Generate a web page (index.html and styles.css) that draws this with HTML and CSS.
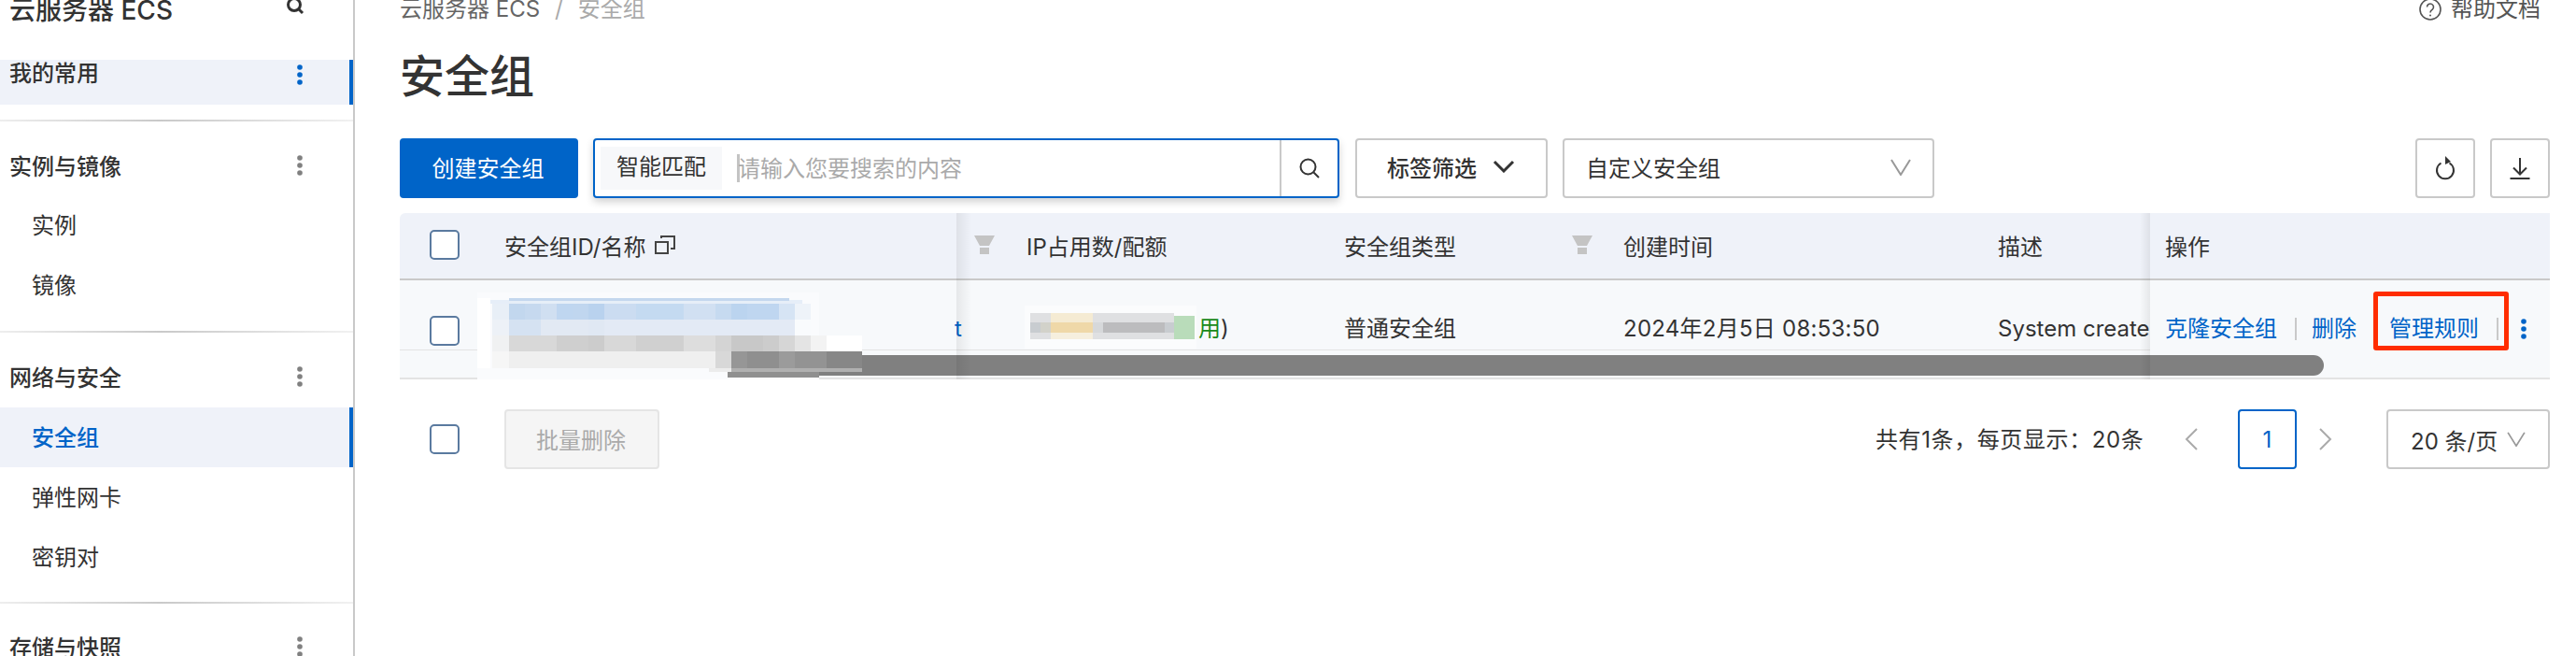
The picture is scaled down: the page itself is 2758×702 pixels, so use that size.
FILE: index.html
```html
<!DOCTYPE html>
<html lang="zh-CN">
<head>
<meta charset="utf-8">
<title>安全组</title>
<link rel="stylesheet" href="styles.css">
</head>
<body>
<div class="page">
  <aside class="sidebar">
    <div class="side-head">
      <span class="side-title">云服务器 ECS</span>
      <svg class="side-search" viewBox="0 0 20 20"><circle cx="9" cy="9" r="6.5"/><path d="M13.5 13.5L18 18"/></svg>
    </div>
    <div class="fav">
      <span class="fav-text">我的常用</span>
      <svg class="dots dots-blue" viewBox="0 0 6 22"><circle cx="3" cy="3" r="2.800"/><circle cx="3" cy="11" r="2.800"/><circle cx="3" cy="19" r="2.800"/></svg>
    </div>
    <div class="divider div-a"></div>
    <div class="nav-head"><span>实例与镜像</span><svg class="dots" viewBox="0 0 6 22"><circle cx="3" cy="3" r="2.800"/><circle cx="3" cy="11" r="2.800"/><circle cx="3" cy="19" r="2.800"/></svg></div>
    <div class="nav-item">实例</div>
    <div class="nav-item">镜像</div>
    <div class="divider div-b"></div>
    <div class="nav-head"><span>网络与安全</span><svg class="dots" viewBox="0 0 6 22"><circle cx="3" cy="3" r="2.800"/><circle cx="3" cy="11" r="2.800"/><circle cx="3" cy="19" r="2.800"/></svg></div>
    <div class="nav-item active">安全组</div>
    <div class="nav-item">弹性网卡</div>
    <div class="nav-item">密钥对</div>
    <div class="divider div-c"></div>
    <div class="nav-head"><span>存储与快照</span><svg class="dots" viewBox="0 0 6 22"><circle cx="3" cy="3" r="2.800"/><circle cx="3" cy="11" r="2.800"/><circle cx="3" cy="19" r="2.800"/></svg></div>
  </aside>

  <main class="main">
    <div class="crumbs">
      <div class="crumb-path"><span>云服务器 ECS</span><span class="crumb-sep">/</span><span class="crumb-now">安全组</span></div>
      <div class="help">
        <svg class="help-icon" viewBox="0 0 24 24"><circle cx="12" cy="12" r="11"/><path d="M8.500 9.500a3.500 3.500 0 1 1 5.600 2.800c-1.300 1-2.100 1.500-2.100 3.200"/><circle class="help-dot" cx="12" cy="18.500" r="1"/></svg>
        <span>帮助文档</span>
      </div>
    </div>
    <h1 class="title">安全组</h1>

    <div class="toolbar">
      <button class="btn-primary">创建安全组</button>
      <div class="search">
        <span class="search-tag">智能匹配</span>
        <span class="caret"></span>
        <span class="placeholder">请输入您要搜索的内容</span>
        <span class="search-btn"><svg class="search-icon" viewBox="0 0 24 24"><circle cx="10.500" cy="10.500" r="8"/><path d="M16.500 16.500L22 22"/></svg></span>
      </div>
      <div class="tag-filter"><span>标签筛选</span><svg class="chev-bold" viewBox="0 0 24 14"><path d="M2 2l10 10L22 2"/></svg></div>
      <div class="select select-group"><span>自定义安全组</span><svg class="chev-thin" viewBox="0 0 22 18"><path d="M1 1l10 16L21 1"/></svg></div>
      <div class="tools">
        <div class="icon-btn"><svg class="refresh" viewBox="0 0 24 28"><path d="M7.500 8.500a9 9 0 1 0 9 0"/><path class="fill" d="M12 1l6 6-6 3z"/></svg></div>
        <div class="icon-btn"><svg class="download" viewBox="0 0 24 24"><path d="M12 1v17M5 11.500l7 7 7-7M1.500 23h21"/></svg></div>
      </div>
    </div>

    <div class="table">
      <div class="grid thead">
        <div class="cell cell-check"><span class="check"></span></div>
        <div class="cell">安全组ID/名称<svg class="copy" viewBox="0 0 22 20"><path d="M1 7h13v12H1zM7 3V1h14v13h-4"/></svg></div>
        <div class="cell cell-filter"><svg class="funnel" viewBox="0 0 22 20"><path d="M0 0h22l-6 11H6zM6 13h10v7H6z"/></svg></div>
        <div class="cell">IP占用数/配额</div>
        <div class="cell cell-between">安全组类型<svg class="funnel funnel-end" viewBox="0 0 22 20"><path d="M0 0h22l-6 11H6zM6 13h10v7H6z"/></svg></div>
        <div class="cell">创建时间</div>
        <div class="cell">描述</div>
        <div class="cell cell-ops">操作</div>
      </div>
      <div class="grid tbody">
        <div class="cell cell-check"><span class="check"></span></div>
        <div class="cell"></div>
        <div class="cell cell-link"><span class="link-tail">t</span></div>
        <div class="cell cell-ip"><span class="ip-used">用</span>)</div>
        <div class="cell">普通安全组</div>
        <div class="cell cell-date">2024年2月5日 08:53:50</div>
        <div class="cell cell-desc">System created</div>
        <div class="cell cell-ops ops">
          <a class="link">克隆安全组</a><i class="sep"></i><a class="link">删除</a><a class="link link-manage">管理规则</a><i class="sep sep-manage"></i>
          <svg class="dots dots-blue dots-ops" viewBox="0 0 6 22"><circle cx="3" cy="3" r="2.800"/><circle cx="3" cy="11" r="2.800"/><circle cx="3" cy="19" r="2.800"/></svg>
        </div>
      </div>
      <div class="scroll-strip"><div class="scroll-thumb"></div></div>

      <span class="freeze freeze-left"></span>
      <span class="freeze freeze-right"></span>
      <span class="redbox"></span>

      <svg class="mosaic" viewBox="511 313 412 93" aria-hidden="true">
        <rect x="511" y="313" width="366" height="93" fill="#fafbfd"/>
        <rect x="511" y="319" width="14" height="75" fill="#fff"/>
        <rect x="525" y="321" width="334" height="4" fill="#e6eef8"/>
        <rect x="545" y="319" width="300" height="3" fill="#c4d7ee"/>
        <rect x="527" y="325" width="18" height="17" fill="#e8eff7"/><rect x="527" y="342" width="18" height="17" fill="#edf1f7"/><rect x="527" y="359" width="18" height="17" fill="#f0f1f2"/><rect x="527" y="376" width="18" height="18" fill="#f6f6f6"/>
        <rect x="545" y="325" width="17" height="17" fill="#c2d7ee"/><rect x="562" y="325" width="17" height="17" fill="#c6d9ef"/><rect x="579" y="325" width="17" height="17" fill="#d0dff1"/><rect x="596" y="325" width="17" height="17" fill="#bfd6f0"/><rect x="613" y="325" width="17" height="17" fill="#c0d6ef"/><rect x="630" y="325" width="17" height="17" fill="#b9d2ee"/><rect x="647" y="325" width="34" height="17" fill="#cbdcf1"/><rect x="681" y="325" width="51" height="17" fill="#c4daf1"/><rect x="732" y="325" width="34" height="17" fill="#d1e0f2"/><rect x="766" y="325" width="17" height="17" fill="#c6daf0"/><rect x="783" y="325" width="17" height="17" fill="#bbd4ef"/><rect x="800" y="325" width="34" height="17" fill="#bfd6f0"/><rect x="834" y="325" width="17" height="17" fill="#d6e4f4"/><rect x="851" y="325" width="17" height="17" fill="#eef3f9"/>
        <rect x="545" y="342" width="34" height="17" fill="#d5e2f2"/><rect x="579" y="342" width="51" height="17" fill="#e2e9f3"/><rect x="630" y="342" width="17" height="17" fill="#e0e8f3"/><rect x="647" y="342" width="204" height="17" fill="#e3eaf5"/><rect x="851" y="342" width="17" height="17" fill="#f9fbfd"/>
        <rect x="545" y="359" width="51" height="17" fill="#d8d8d8"/><rect x="596" y="359" width="34" height="17" fill="#cfcfcf"/><rect x="630" y="359" width="17" height="17" fill="#cccccc"/><rect x="647" y="359" width="34" height="17" fill="#d8d8d8"/><rect x="681" y="359" width="51" height="17" fill="#d0d0d0"/><rect x="732" y="359" width="34" height="17" fill="#dddddd"/><rect x="766" y="359" width="17" height="17" fill="#d4d4d4"/><rect x="783" y="359" width="34" height="17" fill="#c8c8c8"/><rect x="817" y="359" width="17" height="17" fill="#cccccc"/><rect x="834" y="359" width="17" height="17" fill="#d6d6d6"/><rect x="851" y="359" width="17" height="17" fill="#e4e4e4"/><rect x="868" y="359" width="17" height="17" fill="#f3f3f3"/><rect x="885" y="359" width="38" height="17" fill="#ffffff"/>
        <rect x="545" y="376" width="221" height="18" fill="#efefef"/><rect x="766" y="376" width="17" height="18" fill="#d8d8d8"/><rect x="783" y="376" width="17" height="18" fill="#969696"/><rect x="800" y="376" width="34" height="18" fill="#8f8f8f"/><rect x="834" y="376" width="17" height="18" fill="#9b9b9b"/><rect x="851" y="376" width="34" height="18" fill="#939393"/><rect x="885" y="376" width="38" height="18" fill="#878787"/>
        <rect x="783" y="394" width="140" height="4" fill="#b0b0b0"/>
        <rect x="759" y="394" width="24" height="4" fill="#ececec"/>
        <rect x="779" y="398" width="98" height="6" fill="#8f8f8f"/>
        <rect x="877" y="398" width="46" height="4" fill="#808080"/>
      </svg>

      <svg class="mosaic-ip" viewBox="1097 327 184 46" aria-hidden="true">
        <rect x="1097" y="327" width="184" height="46" fill="#fbfcfd"/>
        <rect x="1103" y="335" width="154" height="28" fill="#dfe0e2"/>
        <rect x="1103" y="345" width="154" height="11" fill="#c8ccd0"/>
        <rect x="1114" y="345" width="11" height="11" fill="#d2d2ca"/>
        <rect x="1125" y="335" width="45" height="10" fill="#f5ebd3"/>
        <rect x="1125" y="345" width="45" height="11" fill="#efd8a8"/>
        <rect x="1125" y="356" width="45" height="7" fill="#f6efde"/>
        <rect x="1170" y="345" width="11" height="11" fill="#d6d8da"/>
        <rect x="1181" y="345" width="66" height="11" fill="#bcbcbe"/>
        <rect x="1257" y="338" width="22" height="25" fill="#b9dcba"/>
      </svg>
    </div>

    <div class="footer">
      <span class="check"></span>
      <button class="btn-disabled">批量删除</button>
      <div class="pager">
        <span class="pager-info">共有1条，每页显示：20条</span>
        <svg class="pg-arrow" viewBox="0 0 14 24"><path d="M13 1L2 12l11 11"/></svg>
        <span class="pg-num">1</span>
        <svg class="pg-arrow" viewBox="0 0 14 24"><path d="M1 1l11 11L1 23"/></svg>
        <div class="select select-size"><span>20 条/页</span><svg class="chev-thin chev-small" viewBox="0 0 22 18"><path d="M1 1l10 16L21 1"/></svg></div>
      </div>
    </div>
  </main>
</div>
</body>
</html>
```
FILE: styles.css
```css
* { box-sizing: border-box; }
html, body { margin: 0; padding: 0; height: 100%; overflow: hidden; background: #fff; }
body {
  font-family: Inter, "Noto Sans CJK SC", sans-serif;
  font-size: 24px;
  color: #333;
}
.page { display: flex; height: 702px; overflow: hidden; }

/* sidebar */
.sidebar { width: 380px; flex: none; border-right: 2px solid #c9c9c9; display: flex; flex-direction: column; height: 702px; overflow: hidden; }
.side-head { display: flex; align-items: center; justify-content: space-between; height: 40px; margin-top: -9px; padding: 0 52px 0 10px; flex: none; }
.side-title { font-size: 28px; font-weight: 500; line-height: 40px; }
.side-search { width: 20px; height: 20px; fill: none; stroke: #333; stroke-width: 3; margin-top: -10px; }
.fav { flex: none; height: 48px; margin-top: 33px; background: #eff2f9; border-right: 4px solid #0064c8; padding-left: 10px; display: flex; justify-content: space-between; align-items: flex-start; font-weight: 500; padding-right: 50px; }
.fav-text { line-height: 30px; }
.dots { width: 6px; height: 22px; fill: #808080; flex: none; }
.dots-blue { fill: #0064c8; }
.fav .dots { margin-top: 5px; }
.divider { flex: none; height: 2px; background: linear-gradient(90deg, #eeeeee, #c9c9c9 45%, #f1f1f1); }
.div-a { margin: 16px 0 15px; }
.div-b { margin: 17px 0 15px; }
.div-c { margin: 16px 0 14px; }
.nav-head { flex: none; height: 64px; display: flex; align-items: center; justify-content: space-between; padding: 0 54px 0 10px; font-weight: 500; }
.nav-head span { margin-top: -2px; }
.nav-item { flex: none; height: 64px; line-height: 65px; padding-left: 34px; }
.nav-item.active { background: #eff2f9; color: #0064c8; font-weight: 500; border-right: 4px solid #0064c8; margin-top: 1px; }

/* main */
.main { flex: 1; min-width: 0; padding: 0 28px 0 48px; display: flex; flex-direction: column; }
.crumbs { flex: none; display: flex; justify-content: space-between; height: 40px; margin-top: -10px; line-height: 40px; color: #666; }
.crumb-path { display: flex; }
.crumb-sep { margin: 0 16px; color: #aaa; }
.crumb-now { color: #aaa; }
.help { display: flex; align-items: center; gap: 10px; padding-right: 10px; color: #555; }
.help-icon { width: 24px; height: 24px; fill: none; stroke: #555; stroke-width: 1.600; }
.help-dot { fill: #555; stroke: none; }
.title { flex: none; margin: 20px 0 34px; font-size: 48px; line-height: 64px; font-weight: 500; color: #333; }

/* toolbar */
.toolbar { flex: none; display: flex; height: 64px; }
button { font-family: inherit; font-size: 24px; }
.btn-primary { width: 191px; height: 64px; background: #0064c8; color: #fff; border: 0; border-radius: 4px; padding: 0 2px 4px 0; margin-right: 16px; }
.search { width: 799px; height: 64px; margin-right: 17px; border: 2px solid #0064c8; border-radius: 4px; box-shadow: 0 4px 8px rgba(0, 0, 0, .18); display: flex; align-items: center; background: #fff; position: relative; }
.search-tag { width: 130px; height: 46px; margin-left: 6px; padding-left: 17px; line-height: 44px; background: #f7f8fa; flex: none; }
.caret { width: 3px; height: 30px; margin-left: 16px; background: #c4c4c4; flex: none; }
.placeholder { color: #aaa; margin: 0 0 3px -2px; flex: 1; }
.search-btn { width: 62px; height: 60px; border-left: 2px solid #c9c9c9; display: flex; align-items: center; justify-content: center; flex: none; }
.search-icon { width: 24px; height: 24px; fill: none; stroke: #333; stroke-width: 2; }
.tag-filter { width: 206px; height: 64px; margin-right: 17px; border: 2px solid #c9c9c9; border-radius: 4px; display: flex; align-items: center; padding: 0 0 4px 32px; font-weight: 500; }
.chev-bold { width: 24px; height: 14px; margin-left: 17px; fill: none; stroke: #333; stroke-width: 3; }
.select { height: 64px; border: 2px solid #c9c9c9; border-radius: 4px; display: flex; align-items: center; justify-content: space-between; background: #fff; }
.select-group { width: 398px; margin-left: -1px; padding: 0 23px 3px 23px; }
.chev-thin { width: 22px; height: 18px; fill: none; stroke: #999; stroke-width: 2; }
.tools { margin-left: auto; display: flex; gap: 16px; }
.icon-btn { width: 64px; height: 64px; border: 2px solid #c9c9c9; border-radius: 4px; display: flex; align-items: center; justify-content: center; }
.refresh { width: 24px; height: 28px; fill: none; stroke: #333; stroke-width: 2; }
.refresh .fill { fill: #333; stroke: none; }
.download { width: 24px; height: 24px; fill: none; stroke: #333; stroke-width: 2; }

/* table */
.table { flex: none; margin-top: 16px; position: relative; }
.grid { display: grid; grid-template-columns: 112px 484px 75px 340px 299px 401px 163px 428px; }
.thead { height: 72px; background: #eff2f9; border-bottom: 2px solid #c9c9c9; border-top-right-radius: 6px; border-top-left-radius: 6px; }
.thead .cell { padding-bottom: 2px; }
.tbody { height: 75px; background: #f7f9fb; border-bottom: 1px solid #e3e3e3; }
.cell { display: flex; align-items: center; white-space: nowrap; min-width: 0; }
.tbody .cell { padding-top: 29px; line-height: 46px; }
.cell-check { padding-left: 32px; }
.tbody .cell-check { padding-top: 32px; }
.check { width: 32px; height: 32px; border: 2px solid #5a7a9f; border-radius: 5px; background: #fff; display: block; flex: none; }
.copy { width: 22px; height: 20px; margin-left: 10px; fill: none; stroke: #444; stroke-width: 2; }
.cell-filter { padding-left: 19px; }
.funnel { width: 22px; height: 20px; fill: #c4c4c4; }
.cell-between { justify-content: space-between; padding-right: 33px; }
.cell-link { color: #0064c8; }
.link-tail { margin-left: -2px; }
.cell-ip { padding-left: 184px; }
.ip-used { color: #1a8a1a; }
.cell-date { letter-spacing: .25px; }
.cell-desc { overflow: hidden; }
.cell-ops { padding-left: 16px; background: inherit; }
.ops { color: #0064c8; }
.link { color: #0064c8; }
.sep { width: 2px; height: 24px; background: #c9c9c9; margin: 0 16px 0 19px; flex: none; }
.link-manage { margin-left: 35px; }
.sep-manage { margin: 0 0 0 19px; }
.dots-ops { margin-left: 24px; }
.scroll-strip { height: 31px; background: #f7f9fb; border-bottom: 2px solid #e3e3e3; padding-top: 5px; }
.scroll-thumb { height: 22px; margin-left: 355px; width: 1705px; background: #808080; border-radius: 0 11px 11px 0; }

.freeze { position: absolute; top: 0; bottom: 0; pointer-events: none; }
.freeze-left { left: 596px; width: 16px; background: linear-gradient(90deg, rgba(0, 0, 0, .07), rgba(0, 0, 0, 0)); }
.freeze-right { left: 1863px; width: 11px; background: linear-gradient(90deg, rgba(0, 0, 0, 0), rgba(0, 0, 0, .07)); }
.redbox { position: absolute; left: 2113px; top: 84px; width: 145px; height: 63px; border: 5px solid #ff2d00; border-radius: 3px; }
.mosaic { position: absolute; left: 83px; top: 85px; width: 412px; height: 93px; }
.mosaic-ip { position: absolute; left: 669px; top: 99px; width: 184px; height: 46px; }

/* footer */
.footer { flex: none; margin-top: 32px; height: 64px; display: flex; align-items: center; padding-left: 32px; }
.btn-disabled { width: 166px; height: 64px; margin-left: 48px; background: #f5f5f5; color: #aaa; border: 2px solid #e5e5e5; border-radius: 4px; padding: 0 2px 2px 0; }
.pager { margin-left: auto; display: flex; align-items: center; }
.pager-info { width: 290px; white-space: nowrap; margin-top: -3px; letter-spacing: .6px; }
.pg-arrow { width: 14px; height: 24px; fill: none; stroke: #aaa; stroke-width: 2; }
.pg-arrow:first-of-type { margin-left: 41px; }
.pg-num { width: 63px; height: 64px; margin: 0 24px 0 43px; border: 2px solid #0064c8; border-radius: 4px; color: #0064c8; display: flex; align-items: center; justify-content: center; }
.select-size { width: 175px; margin-left: 58px; padding: 0 24px 0 24px; }
.chev-small { width: 20px; height: 16px; }
```
